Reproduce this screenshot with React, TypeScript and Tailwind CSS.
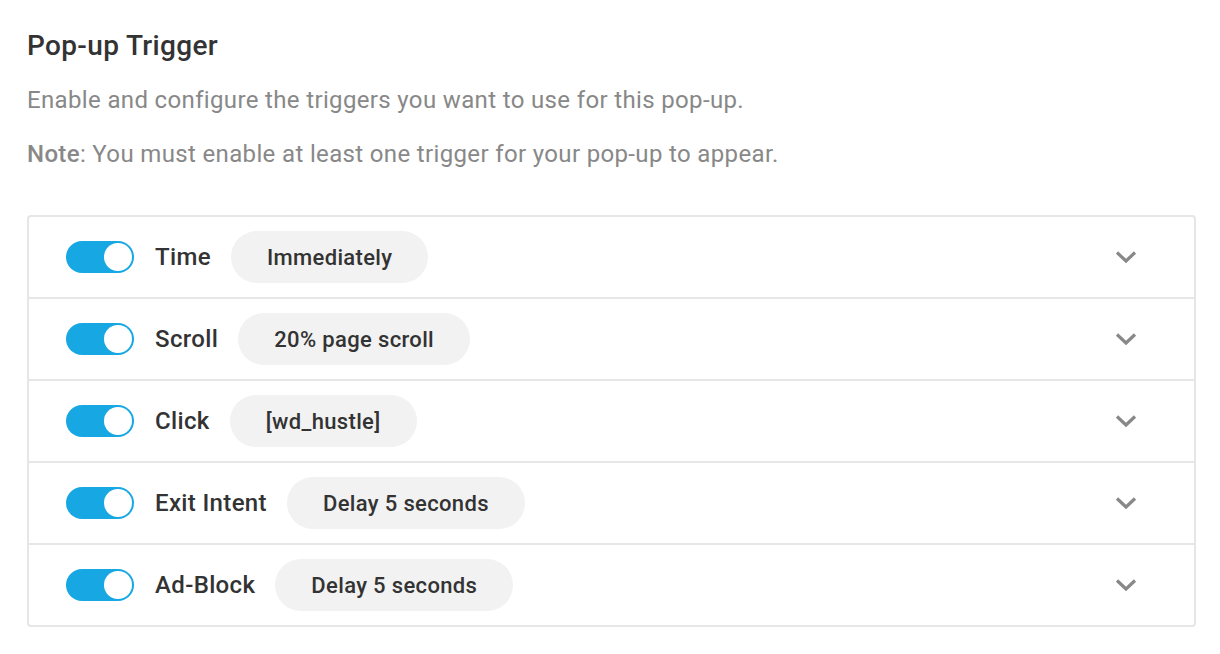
import React from "react";

const rows = [
  { label: "Time", value: "Immediately" },
  { label: "Scroll", value: "20% page scroll" },
  { label: "Click", value: "[wd_hustle]" },
  { label: "Exit Intent", value: "Delay 5 seconds" },
  { label: "Ad-Block", value: "Delay 5 seconds" },
];

function Toggle() {
  return (
    <div className="relative h-[32px] w-[68px] shrink-0 rounded-full bg-[#17a8e3]">
      <div className="absolute right-[2px] top-[2px] h-[28px] w-[28px] rounded-full bg-white" />
    </div>
  );
}

function Chevron() {
  return (
    <svg width="22" height="14" viewBox="0 0 22 14" fill="none">
      <path d="M2 2.5 L11 11 L20 2.5" stroke="#888888" strokeWidth="3.2" strokeLinecap="butt" strokeLinejoin="miter" />
    </svg>
  );
}

export default function App() {
  return (
    <div
      className="min-h-[654px] w-[1220px] bg-white pl-[27px] pr-[24px] pt-[30px] tracking-[0.35px]"
      style={{ fontFamily: "Roboto, 'Noto Sans', sans-serif" }}
    >
      <h1 className="text-[28px] font-medium leading-[32px] text-[#333333]">Pop-up Trigger</h1>
      <p className="mt-[23px] text-[24px] leading-[30px] text-[#888888]">
        Enable and configure the triggers you want to use for this pop-up.
      </p>
      <p className="mt-[24px] text-[24px] leading-[30px] text-[#888888]">
        <span className="font-medium">Note</span>: You must enable at least one trigger for your pop-up to appear.
      </p>
      <div className="mt-[46px] overflow-hidden rounded-[4px] border-2 border-[#e6e6e6]">
        {rows.map((r, i) => (
          <div
            key={r.label}
            className={`flex items-center pl-[37px] pr-[57px] ${i > 0 ? "h-[82px] border-t-2 border-[#e6e6e6]" : "h-[80px]"}`}
          >
            <Toggle />
            <span className="ml-[21px] text-[24px] font-medium leading-[30px] text-[#333333]">{r.label}</span>
            <span className="ml-[20px] flex h-[52px] items-center rounded-full bg-[#f2f2f2] px-[36px] text-[22px] font-medium text-[#333333]">
              {r.value}
            </span>
            <div className="ml-auto flex items-center">
              <Chevron />
            </div>
          </div>
        ))}
      </div>
    </div>
  );
}
